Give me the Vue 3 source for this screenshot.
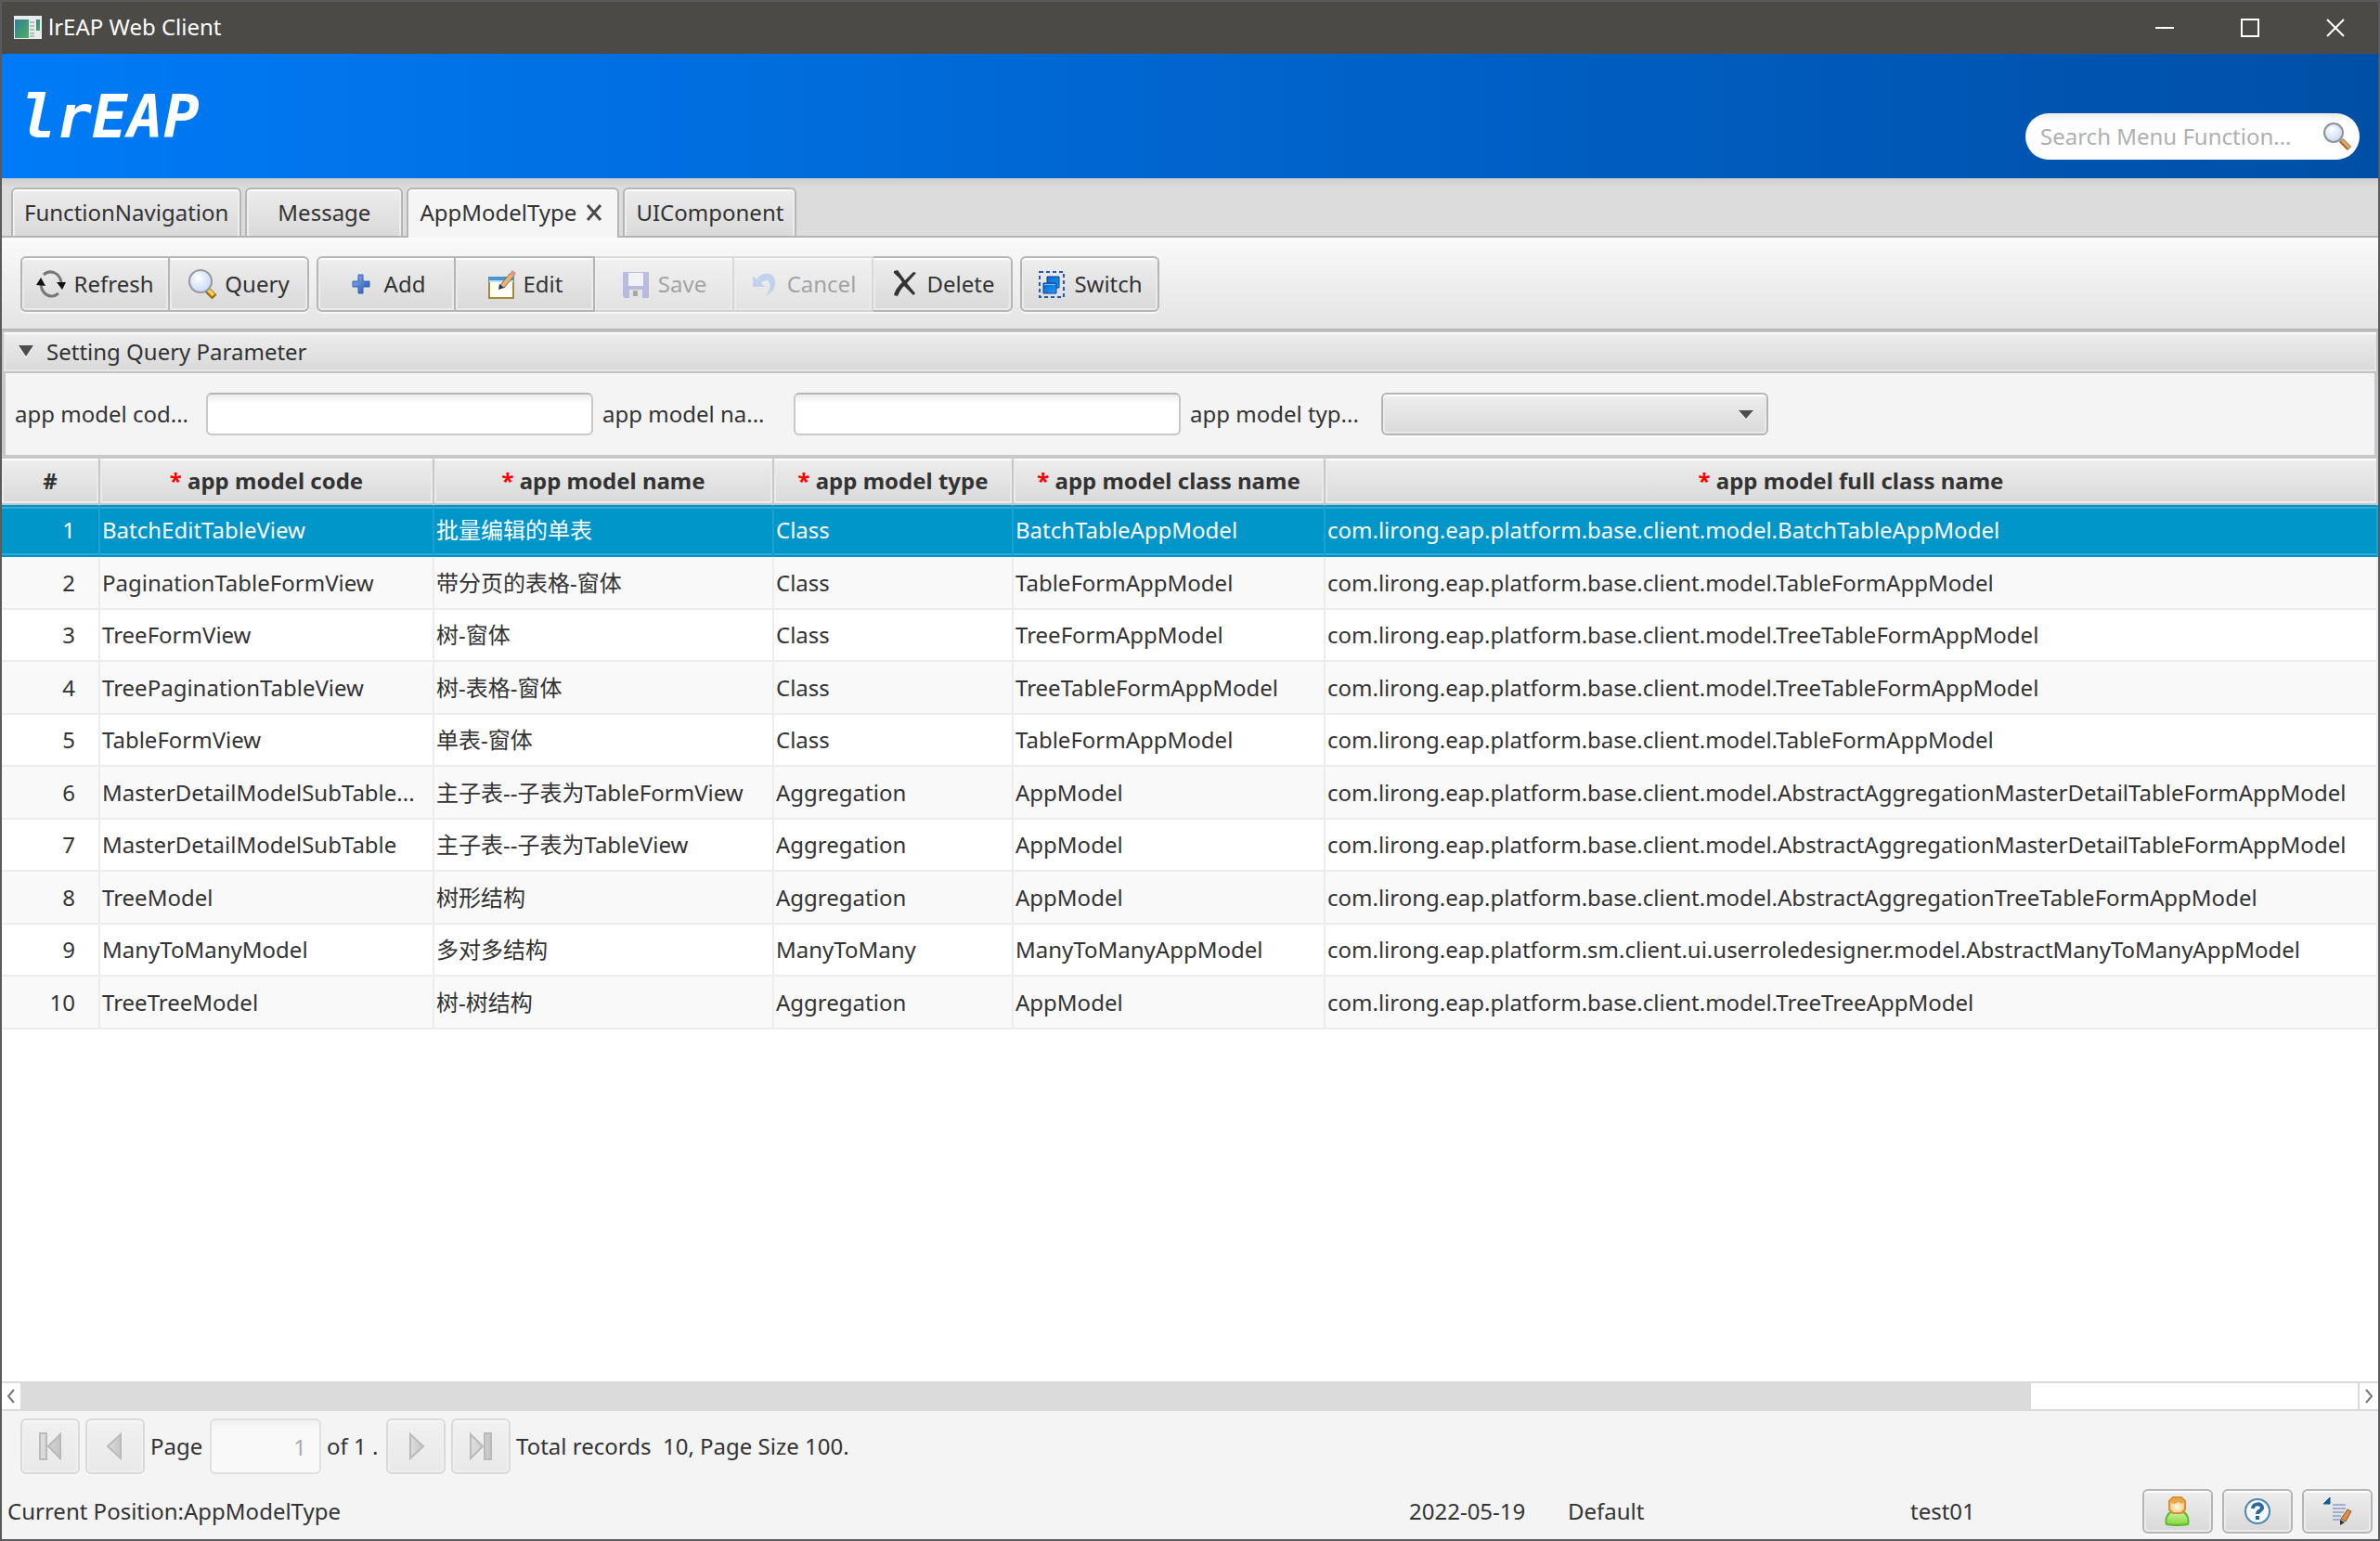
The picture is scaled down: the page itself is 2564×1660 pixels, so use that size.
<script setup>
import { ref } from 'vue'

const search = ref('')
const code = ref('')
const name = ref('')
const type = ref('')
const page = ref('1')
const selected = ref(1)

const tabs = [
  { label: 'FunctionNavigation' },
  { label: 'Message' },
  { label: 'AppModelType', active: true },
  { label: 'UIComponent' },
]

const toolGroups = [
  [
    { label: 'Refresh', icon: 'refresh', wide: true },
    { label: 'Query', icon: 'query' },
  ],
  [
    { label: 'Add', icon: 'add' },
    { label: 'Edit', icon: 'edit' },
    { label: 'Save', icon: 'save', disabled: true },
    { label: 'Cancel', icon: 'cancel', disabled: true },
    { label: 'Delete', icon: 'delete' },
  ],
  [{ label: 'Switch', icon: 'switch' }],
]

const columns = ['app model code', 'app model name', 'app model type', 'app model class name', 'app model full class name']

const base = 'com.lirong.eap.platform.base.client.model.'
const rows = [
  ['BatchEditTableView', '批量编辑的单表', 'Class', 'BatchTableAppModel', base + 'BatchTableAppModel'],
  ['PaginationTableFormView', '带分页的表格-窗体', 'Class', 'TableFormAppModel', base + 'TableFormAppModel'],
  ['TreeFormView', '树-窗体', 'Class', 'TreeFormAppModel', base + 'TreeTableFormAppModel'],
  ['TreePaginationTableView', '树-表格-窗体', 'Class', 'TreeTableFormAppModel', base + 'TreeTableFormAppModel'],
  ['TableFormView', '单表-窗体', 'Class', 'TableFormAppModel', base + 'TableFormAppModel'],
  ['MasterDetailModelSubTable...', '主子表--子表为TableFormView', 'Aggregation', 'AppModel', base + 'AbstractAggregationMasterDetailTableFormAppModel'],
  ['MasterDetailModelSubTable', '主子表--子表为TableView', 'Aggregation', 'AppModel', base + 'AbstractAggregationMasterDetailTableFormAppModel'],
  ['TreeModel', '树形结构', 'Aggregation', 'AppModel', base + 'AbstractAggregationTreeTableFormAppModel'],
  ['ManyToManyModel', '多对多结构', 'ManyToMany', 'ManyToManyAppModel', 'com.lirong.eap.platform.sm.client.ui.userroledesigner.model.AbstractManyToManyAppModel'],
  ['TreeTreeModel', '树-树结构', 'Aggregation', 'AppModel', base + 'TreeTreeAppModel'],
]
</script>

<template>
  <div class="window">
    <svg class="defs" width="0" height="0" aria-hidden="true">
      <defs>
        <radialGradient id="lens" cx=".4" cy=".35" r=".7">
          <stop offset="0" stop-color="#fff" /><stop offset="1" stop-color="#c3d6f5" />
        </radialGradient>
        <linearGradient id="leaf" x1="0" y1="0" x2="1" y2="1">
          <stop offset="0" stop-color="#2f7f92" /><stop offset="1" stop-color="#4fae62" />
        </linearGradient>
        <linearGradient id="plus" x1="0" y1="0" x2="1" y2="1">
          <stop offset="0" stop-color="#8db4ee" /><stop offset="1" stop-color="#1f4fae" />
        </linearGradient>
        <linearGradient id="sq" x1="0" y1="0" x2="1" y2="1">
          <stop offset="0" stop-color="#0c64c8" /><stop offset="1" stop-color="#1e9bff" />
        </linearGradient>
        <radialGradient id="face" cx=".5" cy=".6" r=".6">
          <stop offset="0" stop-color="#fffbe8" /><stop offset="1" stop-color="#f6bd62" />
        </radialGradient>
        <linearGradient id="shirt" x1="0" y1="0" x2="0" y2="1">
          <stop offset="0" stop-color="#d3f3a4" /><stop offset="1" stop-color="#86d43c" />
        </linearGradient>
        <linearGradient id="nav" x1="0" y1="0" x2="1" y2="0">
          <stop offset="0" stop-color="#c0c0c0" /><stop offset="1" stop-color="#808080" />
        </linearGradient>
      </defs>
    </svg>

    <header class="titlebar">
      <svg class="app-icon" viewBox="0 0 30 26">
        <rect x="0" y="0" width="30" height="25" fill="#e9ecec" />
        <rect x="1" y="4" width="15" height="20" fill="url(#leaf)" />
        <path d="M17 7h5M17 11h5M17 15h5M17 19h5M17 22h5" stroke="#b4bcbc" stroke-width="2" />
        <rect x="24" y="4" width="4" height="12" fill="url(#leaf)" />
      </svg>
      <span class="title">lrEAP Web Client</span>
      <button class="win" aria-label="Minimize"><svg viewBox="0 0 20 20"><path d="M0 10h20" stroke="#fff" stroke-width="2" /></svg></button>
      <button class="win" aria-label="Maximize"><svg viewBox="0 0 20 20"><path d="M1 1h18v18H1z" fill="none" stroke="#fff" stroke-width="2" /></svg></button>
      <button class="win" aria-label="Close"><svg viewBox="0 0 20 20"><path d="M1 1l18 18M19 1L1 19" stroke="#fff" stroke-width="2" /></svg></button>
    </header>

    <div class="banner">
      <h1 class="logo">lrEAP</h1>
      <label class="search">
        <input v-model="search" type="text" placeholder="Search Menu Function..." aria-label="Search Menu Function" />
        <svg viewBox="0 0 32 32">
          <path d="M20 20l9 9" stroke="#a8672c" stroke-width="6" />
          <path d="M21 20l8 8" stroke="#deab74" stroke-width="3" />
          <circle cx="12" cy="12" r="10" fill="url(#lens)" stroke="#8f9296" stroke-width="2" />
        </svg>
      </label>
    </div>

    <nav class="tabs">
      <div v-for="t in tabs" :key="t.label" class="tab" :class="{ active: t.active }">
        <button class="tab-label">{{ t.label }}</button>
        <button v-if="t.active" class="tab-close" aria-label="Close tab">
          <svg viewBox="0 0 18 18"><path d="M2 1l14 16M16 1L2 17" stroke="#4a4a4a" stroke-width="3" /></svg>
        </button>
      </div>
    </nav>

    <div class="toolbar">
      <div v-for="(g, i) in toolGroups" :key="i" class="group">
        <button v-for="b in g" :key="b.label" class="tool" :class="{ wide: b.wide }" :disabled="b.disabled">
          <svg viewBox="0 0 32 32">
            <g v-if="b.icon === 'refresh'">
              <path d="M8 6C14 0 25 3 27 14M24 26C17 32 7 29 5 17" fill="none" stroke="#777" stroke-width="3" />
              <path d="M0 17l5-8 5 9zM22 14h10l-4 8z" fill="#111" />
            </g>
            <g v-else-if="b.icon === 'query'">
              <path d="M21 22l8 8" stroke="#9a6a10" stroke-width="7" />
              <path d="M21 21l7 7" stroke="#f2cf55" stroke-width="4" />
              <circle cx="14" cy="13" r="12" fill="url(#lens)" stroke="#96989c" stroke-width="2" />
            </g>
            <path v-else-if="b.icon === 'add'" d="M12 6h5v7h7v6h-7v7h-5v-7H6v-6h6z" fill="url(#plus)" stroke="#3560b4" />
            <g v-else-if="b.icon === 'edit'">
              <path d="M3 9h26v22H3z" fill="#fdfdf6" stroke="#a08a3c" stroke-width="2" />
              <path d="M2 8h28v4H2z" fill="#4a97cf" /><path d="M3 12h26v2H3z" fill="#bfe0f2" />
              <path d="M15 17L26 4l4 3-11 13z" fill="#e3b57a" stroke="#8d6331" />
              <path d="M25 5l3-4 4 3-2 4z" fill="#e0938a" />
              <path d="M14 16l5 4-6 2z" fill="#22365e" />
            </g>
            <g v-else-if="b.icon === 'save'">
              <path d="M2 3h28v28H4l-2-2z" fill="#6f6fcb" />
              <path d="M8 4h16v14H8z" fill="#f3f5ff" /><path d="M9 22h14v9H9z" fill="#d8d8d2" />
              <path d="M13 23h5v6h-5z" fill="#444" />
            </g>
            <path v-else-if="b.icon === 'cancel'" d="M3 7l4 4C14 1 28 3 27 15c0 6-4 11-10 14 6-8 6-16 1-17-3 0-5 1-6 3l4 4H3z" fill="#7fa8e8" />
            <path v-else-if="b.icon === 'delete'" d="M4 2l4-1 8 11 9-9 3 1-10 11 9 11-2 2-10-10c-4 4-5 7-7 11l-4-1c1-5 4-9 9-14C10 9 7 7 4 4z" fill="#333" />
            <g v-else>
              <path d="M3 3h26v27H3z" fill="none" stroke="#2458b4" stroke-width="2" stroke-dasharray="4 3" />
              <path d="M11 8h13v12H11z" fill="url(#sq)" stroke="#0a3f92" />
              <path d="M7 15h14v11H7z" fill="url(#sq)" stroke="#0a3f92" />
              <path d="M8 16h12v1H8z" fill="#7fc3ff" />
            </g>
          </svg>
          <span>{{ b.label }}</span>
        </button>
      </div>
    </div>

    <section class="pane">
      <button class="pane-head" aria-expanded="true">
        <svg viewBox="0 0 16 14"><path d="M0 1h16L8 14z" fill="#fff" /><path d="M0 0h16L8 12z" fill="#4d4d4d" /></svg>
        Setting Query Parameter
      </button>
      <form class="pane-body" @submit.prevent>
        <label for="code">app model cod...</label>
        <input id="code" v-model="code" type="text" />
        <label for="name">app model na...</label>
        <input id="name" v-model="name" type="text" />
        <label for="type">app model typ...</label>
        <span class="combo">
          <select id="type" v-model="type"><option value=""></option><option>Class</option><option>Aggregation</option><option>ManyToMany</option></select>
          <svg viewBox="0 0 16 10"><path d="M0 1h16L8 10z" fill="#fff" /><path d="M0 0h16L8 9z" fill="#4d4d4d" /></svg>
        </span>
      </form>
    </section>

    <main class="grid">
      <table>
        <colgroup><col class="c0" /><col class="c1" /><col class="c2" /><col class="c3" /><col class="c4" /><col /></colgroup>
        <thead>
          <tr>
            <th scope="col">#</th>
            <th v-for="c in columns" :key="c" scope="col"><i>*</i> {{ c }}</th>
          </tr>
        </thead>
        <tbody>
          <tr v-for="(r, i) in rows" :key="i" :class="{ selected: selected === i + 1 }" @click="selected = i + 1">
            <td class="num">{{ i + 1 }}</td>
            <td v-for="(v, j) in r" :key="j">{{ v }}</td>
          </tr>
        </tbody>
      </table>
    </main>

    <div class="scroll">
      <button aria-label="Scroll left"><svg viewBox="0 0 10 16"><path d="M8 1L2 8l6 7" fill="none" stroke="#777" stroke-width="2" /></svg></button>
      <div class="track"><div class="thumb"></div></div>
      <button aria-label="Scroll right"><svg viewBox="0 0 10 16"><path d="M2 1l6 7-6 7" fill="none" stroke="#777" stroke-width="2" /></svg></button>
    </div>

    <div class="pager">
      <button class="btn page-btn" disabled aria-label="First page"><svg viewBox="0 0 28 32"><path d="M3 2h7v28H3zM25 3v26L12 16z" fill="url(#nav)" stroke="#666" stroke-width="2" /></svg></button>
      <button class="btn page-btn" disabled aria-label="Previous page"><svg viewBox="0 0 28 32"><path d="M20 3v26L6 16z" fill="url(#nav)" stroke="#666" stroke-width="2" /></svg></button>
      <label for="page">Page</label>
      <input id="page" v-model="page" type="text" disabled />
      <span class="of">of 1 .</span>
      <button class="btn page-btn" disabled aria-label="Next page"><svg viewBox="0 0 28 32"><path d="M8 3v26l14-13z" fill="url(#nav)" stroke="#666" stroke-width="2" /></svg></button>
      <button class="btn page-btn" disabled aria-label="Last page"><svg viewBox="0 0 28 32"><path d="M18 2h7v28h-7zM3 3v26l13-13z" fill="url(#nav)" stroke="#666" stroke-width="2" /></svg></button>
      <span class="total">Total records&nbsp; 10, Page Size 100.</span>
    </div>

    <footer class="status">
      <span class="pos">Current Position:AppModelType</span>
      <span class="date">2022-05-19</span>
      <span class="org">Default</span>
      <span class="user">test01</span>
      <button class="btn status-btn" aria-label="User">
        <svg viewBox="0 0 32 32">
          <path d="M4 30c-2-7 2-13 7-14h9c5 1 9 7 7 14-6 1-17 1-23 0z" fill="url(#shirt)" stroke="#5cb82e" stroke-width="2" stroke-linejoin="round" />
          <path d="M11 1h9l4 4v9l-4 4h-9l-4-4V5z" fill="url(#face)" stroke="#d9902f" stroke-width="2" />
          <path d="M8 7l3-5h9l3 4-3 2-3-2-4 2z" fill="#e8a850" />
        </svg>
      </button>
      <button class="btn status-btn" aria-label="Help">
        <svg viewBox="0 0 32 32">
          <circle cx="16" cy="16" r="13" fill="#f4f9fd" stroke="#4f84b0" stroke-width="2" />
          <path d="M11 13c0-6 10-6 10-1 0 4-5 3-5 7" fill="none" stroke="#2f6796" stroke-width="4" />
          <path d="M14 21h4v4h-4z" fill="#2f6796" />
        </svg>
      </button>
      <button class="btn status-btn" aria-label="Log">
        <svg viewBox="0 0 32 32">
          <path d="M1 8l7-7v7z" fill="#1c5a8c" stroke="#1c5a8c" />
          <path d="M11 9h14M11 13h14M11 17h12M11 21h9M11 25h9" stroke="#a3aed4" stroke-width="2" />
          <path d="M20 24l7-10 4 2-6 11z" fill="#d98f45" stroke="#8b5a2b" />
          <path d="M19 25l5 3-5 3z" fill="#333" />
        </svg>
      </button>
    </footer>
  </div>
</template>

<style>
body { background: #f4f4f4; }
</style>

<style scoped>
* { box-sizing: border-box; }
.window {
  display: flex;
  flex-direction: column;
  min-height: 100vh;
  border: 2px solid #5a5a5c;
  background: #f4f4f4;
  color: #333;
  font-family: "Noto Sans", "Noto Sans CJK SC", sans-serif;
  font-size: 24px;
  line-height: 32px;
}
.defs { position: absolute; }
button, input, select { font: inherit; color: inherit; margin: 0; padding: 0; }
svg { display: block; flex: none; }

.titlebar { display: flex; align-items: center; height: 56px; padding-left: 13px; background: #4c4a47; color: #fff; }
.app-icon { width: 30px; height: 26px; margin-right: 7px; }
.title { flex: 1; padding-bottom: 2px; }
.win { display: grid; place-items: center; width: 92px; height: 56px; border: 0; background: none; }
.win svg { width: 20px; height: 20px; }

.banner { display: flex; justify-content: space-between; height: 134px; padding: 0 20px; background: linear-gradient(90deg, #007bf7, #004fa6); }
.logo { margin: 26px 0 0; color: #fff; font: italic bold 64px/84px "DejaVu Sans Mono", monospace; }
.search { display: flex; align-items: center; align-self: flex-end; width: 360px; height: 50px; margin-bottom: 20px; padding: 0 8px 0 16px; border-radius: 25px; background: linear-gradient(#ececec, #fff 10px); }
.search input { flex: 1; min-width: 0; border: 0; background: none; outline: none; }
.search input::placeholder { color: #b0b0b0; opacity: 1; }
.search svg { width: 32px; height: 32px; }

.tabs { display: flex; gap: 4px; height: 64px; padding: 10px 10px 0; border-bottom: 2px solid #b5b5b5; background: linear-gradient(#cfcfcf, #dcdcdc 10px); }
.tab { display: flex; align-items: center; justify-content: center; gap: 10px; min-width: 170px; height: 52px; padding: 0 12px; border: 2px solid #b5b5b5; border-bottom: 0; border-radius: 6px 6px 0 0; background: linear-gradient(#ececec, #dadada); box-shadow: inset 0 2px #fff, inset 2px 0 #eee, inset -2px 0 #eee; }
.tab.active { height: 54px; padding-bottom: 2px; background: #f5f5f5; box-shadow: inset 0 2px #fff; }
.tab-label, .tab-close { border: 0; background: none; }
.tab-close { padding-right: 4px; }
.tab-close svg { width: 18px; height: 18px; }

.toolbar { display: flex; gap: 8px; height: 100px; padding: 20px 20px 0; border-bottom: 2px solid #b5b5b5; background: linear-gradient(#fafafa, #e4e4e4); }
.group { display: flex; height: 60px; border-radius: 6px; box-shadow: 0 2px #f7f7f7; }
.tool { display: flex; align-items: center; justify-content: center; gap: 8px; min-width: 150px; padding: 0 14px; border: solid #b5b5b5; border-width: 2px 2px 2px 0; background: linear-gradient(#eee, #d9d9d9); box-shadow: inset 0 2px #fff, inset 0 0 0 2px #ebebeb; }
.tool:first-child { border-left-width: 2px; border-radius: 6px 0 0 6px; }
.tool:last-child { border-radius: 0 6px 6px 0; }
.tool:only-child { border-radius: 6px; }
.tool.wide { min-width: 161px; }
.tool svg { width: 32px; height: 32px; }
.tool:disabled, .btn:disabled { opacity: .4; }

.pane-head { display: flex; align-items: center; gap: 14px; width: 100%; height: 46px; padding: 0 16px; border: 2px solid #c4c4c4; background: linear-gradient(#eee, #d9d9d9); box-shadow: inset 0 2px #fff, inset 0 0 0 2px #e6e6e6; text-align: left; }
.pane-head svg { width: 16px; height: 14px; }
.pane-body { display: grid; grid-template-columns: repeat(3, 196px 417px); gap: 10px; align-items: center; height: 92px; padding: 0 10px; border: solid #c8c8c8; border-width: 0 4px 4px; }
.pane-body input, .combo { height: 46px; border: 2px solid #c8c8c8; border-top-color: #b5b5b5; border-radius: 6px; background: linear-gradient(#ececec, #fff 10px); }
.pane-body input { width: 100%; padding: 0 12px; }
.combo { position: relative; border-color: #b5b5b5; background: linear-gradient(#eee, #d9d9d9); box-shadow: inset 0 2px #fff, inset 0 0 0 2px #e9e9e9, 0 2px #fbfbfb; }
.combo select { width: 100%; height: 100%; padding: 0 12px; border: 0; background: none; appearance: none; }
.combo svg { position: absolute; top: 17px; right: 14px; width: 16px; height: 10px; pointer-events: none; }

.grid { flex: 1; overflow: hidden; background: #fff; }
table { width: 100%; table-layout: fixed; border-collapse: separate; border-spacing: 0; }
.c0 { width: 106px; }
.c1 { width: 360px; }
.c2 { width: 366px; }
.c3 { width: 258px; }
.c4 { width: 336px; }
th, td { overflow: hidden; padding: 0 0 0 2px; white-space: nowrap; text-align: left; }
th { height: 50px; padding: 0; border-right: 2px solid #c8c8c8; border-bottom: 2px solid #c4c4c4; background: linear-gradient(#eee, #d9d9d9); box-shadow: inset 0 2px #fff, inset 0 0 0 2px #ebebeb; text-align: center; }
th i { color: #f00; font-style: normal; }
td { height: 56px; border-right: 2px solid #ededed; border-bottom: 2px solid #ededed; }
tr:nth-child(even) td { height: 57px; background: #f9f9f9; }
td.num { padding-right: 25px; text-align: right; }
.selected td { border-right-color: #1ea1d1; border-bottom-color: #0096c9; background: #0096c9; box-shadow: inset 0 2px #0096c9, inset 0 4px #30a9d5, inset 0 -2px #30a9d5; color: #fff; }

.scroll { display: flex; gap: 2px; height: 32px; padding: 2px 0; background: #dbdbdb; }
.scroll button { display: grid; place-items: center; width: 20px; border: 0; background: #fff; }
.scroll svg { width: 10px; height: 16px; }
.track { flex: 1; background: #fff; }
.thumb { width: 86%; height: 100%; background: #dbdbdb; }

.btn { display: grid; place-items: center; border: 2px solid #b5b5b5; border-radius: 6px; background: linear-gradient(#eee, #d9d9d9); box-shadow: inset 0 2px #fff, inset 0 0 0 2px #ebebeb, 0 2px #fbfbfb; }
.pager { display: flex; align-items: center; gap: 6px; padding: 8px 20px; }
.pager label, .of { min-width: 58px; }
.page-btn { width: 64px; height: 60px; }
.page-btn svg { width: 28px; height: 32px; }
.pager input { width: 120px; height: 60px; padding: 0 14px; border: 2px solid #e0e0e0; border-radius: 6px; background: linear-gradient(#f1f1f1, #f9f9f9 10px); color: #aaa; text-align: right; }

.status { display: flex; align-items: center; padding: 8px 6px 6px; }
.pos { flex: 1; }
.date { width: 171px; }
.org { width: 369px; }
.user { width: 250px; }
.status-btn { width: 76px; height: 48px; }
.status-btn + .status-btn { margin-left: 10px; }
.status-btn svg { width: 32px; height: 32px; }
</style>
